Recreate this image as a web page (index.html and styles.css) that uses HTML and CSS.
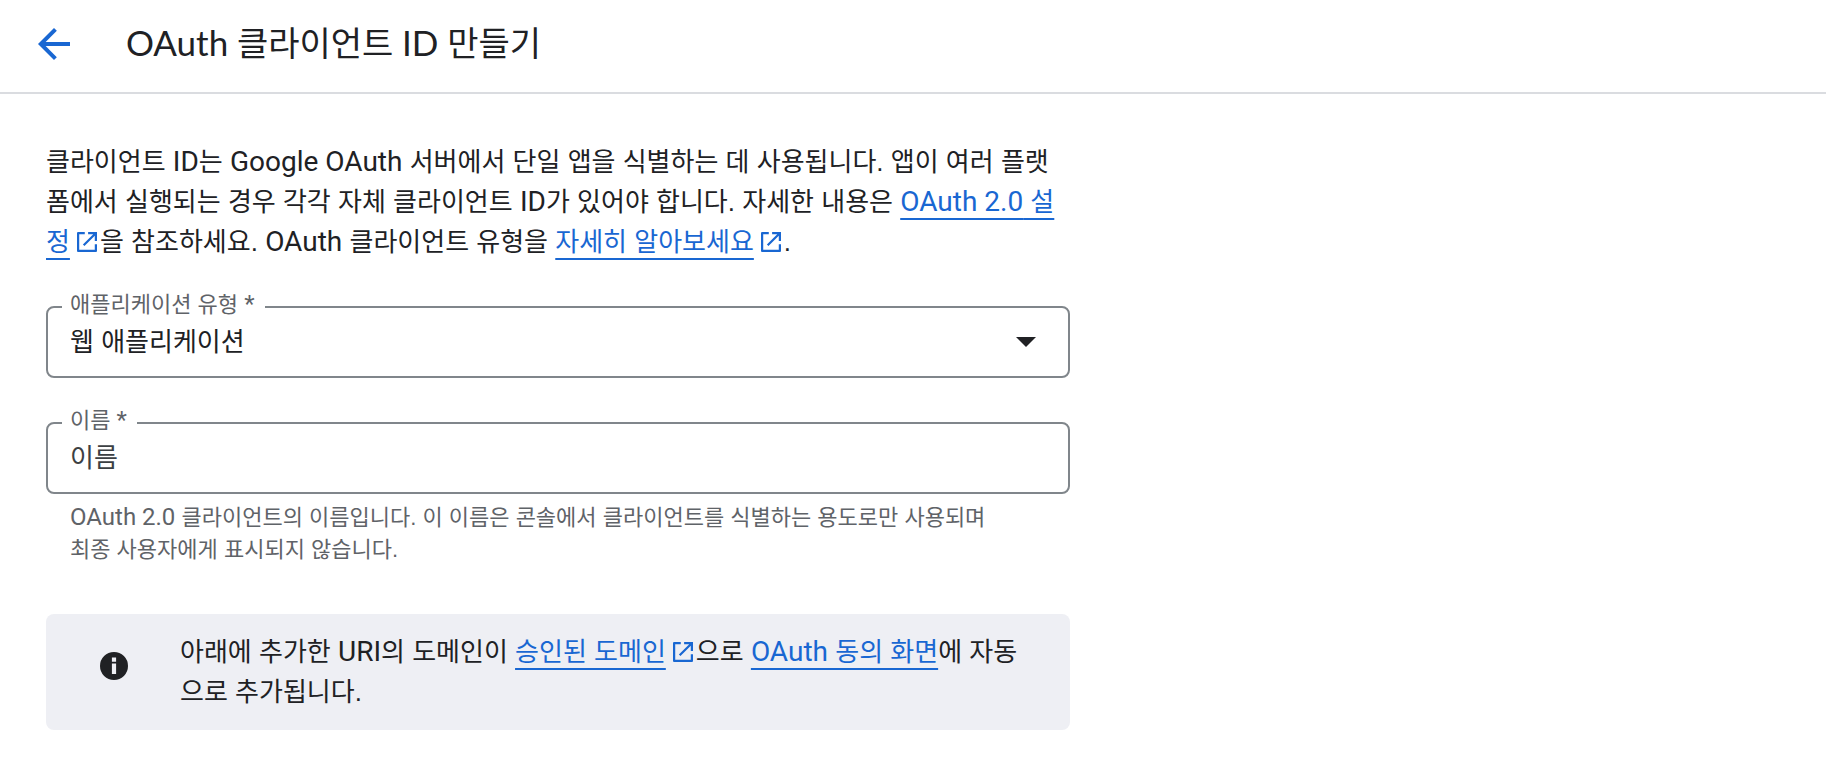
FILE: index.html
```html
<!DOCTYPE html>
<html lang="ko">
<head>
<meta charset="utf-8">
<title>OAuth 클라이언트 ID 만들기</title>
<link rel="stylesheet" href="styles.css">
</head>
<body>
<svg class="sprite" aria-hidden="true">
  <symbol id="external" viewBox="3 3 18 18">
    <path d="M19 19H5V5h5V3H4a1 1 0 0 0-1 1v16a1 1 0 0 0 1 1h16a1 1 0 0 0 1-1v-6h-2z"/>
    <path d="M13 3v2h4.590L8.300 14.290l1.410 1.410L19 6.410V11h2V3z"/>
  </symbol>
</svg>
<header class="topbar">
  <button class="back" type="button" aria-label="뒤로">
    <svg viewBox="0 0 24 24" aria-hidden="true"><path d="M20 11H7.830l5.590-5.590L12 4l-8 8 8 8 1.410-1.410L7.830 13H20z"/></svg>
  </button>
  <h1 class="title"><span class="latin-title">OAuth</span> 클라이언트 <span class="latin-title">ID</span> 만들기</h1>
</header>
<main class="content">
  <p class="text">클라이언트 <span class="latin">ID</span>는 <span class="latin">Google OAuth</span> 서버에서 단일 앱을 식별하는 데 사용됩니다. 앱이 여러 플랫폼에서 실행되는 경우 각각 자체 클라이언트 <span class="latin">ID</span>가 있어야 합니다. 자세한 내용은 <a class="link" href="#"><span class="latin">OAuth 2.0</span> 설정</a><svg class="external"><use href="#external"/></svg>을 참조하세요. <span class="latin">OAuth</span> 클라이언트 유형을 <a class="link" href="#">자세히 알아보세요</a><svg class="external"><use href="#external"/></svg>.</p>
  <form class="form">
    <div class="field">
      <label class="label" for="type">애플리케이션 유형 <span class="latin-small">*</span></label>
      <select class="control" id="type"><option>웹 애플리케이션</option></select>
      <svg class="caret" viewBox="0 0 20 10" aria-hidden="true"><path d="M0 0h20L10 10z"/></svg>
    </div>
    <div class="group">
      <div class="field">
        <label class="label" for="name">이름 <span class="latin-small">*</span></label>
        <input class="control" id="name" type="text" placeholder="이름" aria-describedby="name-hint">
      </div>
      <p class="hint" id="name-hint"><span class="latin-small">OAuth 2.0</span> 클라이언트의 이름입니다. 이 이름은 콘솔에서 클라이언트를 식별하는 용도로만 사용되며 최종 사용자에게 표시되지 않습니다.</p>
    </div>
  </form>
  <aside class="notice">
    <svg class="info" viewBox="2 2 20 20" aria-hidden="true"><path d="M12 2a10 10 0 1 0 0 20 10 10 0 0 0 0-20zm1.500 15.700h-3v-7.400h3zm0-8.800h-3V6h3z"/></svg>
    <p class="text">아래에 추가한 <span class="latin">URI</span>의 도메인이 <a class="link" href="#">승인된 도메인</a><svg class="external"><use href="#external"/></svg>으로 <a class="link" href="#"><span class="latin">OAuth</span> 동의 화면</a>에 자동으로 추가됩니다.</p>
  </aside>
</main>
</body>
</html>
```
FILE: styles.css
```css
* { box-sizing: border-box; }

body {
  margin: 0;
  background: #fff;
  color: #202124;
  font-family: "Liberation Sans", "Noto Sans CJK KR", sans-serif;
  font-size: 26px;
  line-height: 40px;
}

p, h1 { margin: 0; }

.sprite { display: none; }

.topbar {
  display: flex;
  align-items: flex-start;
  gap: 48px;
  padding: 20px 30px 24px;
  border-bottom: 2px solid #dadce0;
}

.back {
  width: 48px;
  height: 48px;
  padding: 0;
  border: 0;
  background: none;
  cursor: pointer;
}

.back svg { display: block; fill: #1967d2; }

.title {
  font-family: Lato, "Noto Sans CJK KR", sans-serif;
  font-size: 34px;
  font-weight: 400;
  line-height: 46px;
}

.content {
  max-width: 1116px;
  padding: 48px 46px;
}

.latin,
.latin-small {
  font-family: Roboto, sans-serif;
  line-height: 1;
}

.latin { font-size: 28px; }
.latin-small { font-size: 24px; }
.latin-title { font-size: 35px; line-height: 1; }

.link {
  color: #1967d2;
  text-decoration: underline 2px;
  text-decoration-skip-ink: none;
  text-underline-offset: 7px;
}

.external {
  width: 20px;
  height: 20px;
  margin: 0 3px 0 7px;
  fill: #1967d2;
  vertical-align: -1px;
}

.form {
  display: flex;
  flex-direction: column;
  gap: 44px;
  margin-top: 44px;
}

.field { position: relative; }

.label {
  position: absolute;
  top: -17px;
  left: 16px;
  padding: 0 10px 0 8px;
  background: #fff;
  color: #5f6368;
  font-size: 22px;
  line-height: 32px;
}

.control {
  display: block;
  width: 100%;
  height: 72px;
  padding: 0 22px;
  border: 2px solid #80868b;
  border-radius: 8px;
  appearance: none;
  background: #fff;
  color: #202124;
  font: inherit;
}

.control::placeholder { color: #3c4043; opacity: 1; }

.caret {
  position: absolute;
  top: 31px;
  right: 34px;
  width: 20px;
  height: 10px;
  fill: #202124;
  pointer-events: none;
}

.hint {
  padding: 8px 66px 0 24px;
  color: #5f6368;
  font-size: 22px;
  line-height: 32px;
}

.notice {
  display: flex;
  align-items: flex-start;
  gap: 52px;
  margin-top: 48px;
  padding: 18px 32px 18px 54px;
  border-radius: 8px;
  background: #eeeff4;
}

.info {
  flex: none;
  width: 28px;
  height: 28px;
  margin-top: 20px;
  fill: #202124;
}
```
